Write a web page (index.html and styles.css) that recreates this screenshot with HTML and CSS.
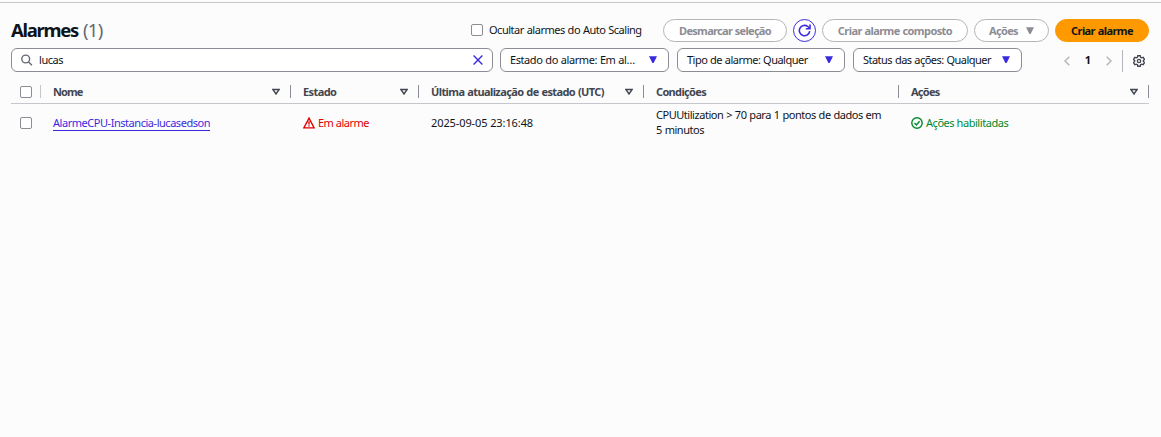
FILE: index.html
```html
<!DOCTYPE html>
<html lang="pt-BR">
<head>
<meta charset="utf-8">
<title>Alarmes</title>
<link rel="stylesheet" href="styles.css">
</head>
<body>
<main class="panel">
  <header class="header">
    <h1 class="title">Alarmes <span class="count">(1)</span></h1>
    <label class="hide-option"><span class="checkbox"></span><span class="hide-label">Ocultar alarmes do Auto Scaling</span></label>
    <div class="actions">
      <button class="button deselect">Desmarcar seleção</button>
      <button class="button refresh" aria-label="Atualizar"><svg width="13" height="13" viewBox="0 0 13 13"><path d="M11.700 7.200A5.200 5.200 0 1 1 9.800 2.500L11.400 4"/><path d="M12 .5v4.200H7.800"/></svg></button>
      <button class="button composite">Criar alarme composto</button>
      <button class="button menu"><span>Ações</span><svg width="8" height="7" viewBox="0 0 8 7"><path d="M0 .3h8L4.6 7H3.4z"/></svg></button>
      <button class="button primary">Criar alarme</button>
    </div>
  </header>
  <div class="filters">
    <div class="search">
      <svg class="lens" width="12" height="12" viewBox="0 0 12 12"><circle cx="4.700" cy="5" r="3.9"/><path d="M7.600 7.900l3.300 3.300"/></svg>
      <span class="query">lucas</span>
      <svg class="clear" width="10" height="10" viewBox="0 0 10 10"><path d="M.6.6l8.8 8.8M9.4.6L.6 9.4"/></svg>
    </div>
    <div class="select state"><span>Estado do alarme: Em al…</span><svg width="8" height="7" viewBox="0 0 8 7"><path d="M0 .3h8L4.6 7H3.4z"/></svg></div>
    <div class="select type"><span>Tipo de alarme: Qualquer</span><svg width="8" height="7" viewBox="0 0 8 7"><path d="M0 .3h8L4.6 7H3.4z"/></svg></div>
    <div class="select status"><span>Status das ações: Qualquer</span><svg width="8" height="7" viewBox="0 0 8 7"><path d="M0 .3h8L4.6 7H3.4z"/></svg></div>
    <nav class="pager">
      <svg class="arrow" width="6" height="10" viewBox="0 0 6 10"><path d="M5.3.8L1 5l4.3 4.2"/></svg>
      <b class="page">1</b>
      <svg class="arrow" width="6" height="10" viewBox="0 0 6 10"><path d="M.7.8L5 5 .7 9.2"/></svg>
      <span class="rule"></span>
      <svg class="gear" width="12" height="12" viewBox="0 0 16 16"><path d="M6.3 1h3.4l.4 2 1.500.800 2-.700 1.700 2.900L13.800 7.300v1.400l1.500 1.300-1.700 2.900-2-.700-1.500.800-.400 2H6.300l-.400-2-1.500-.800-2 .700L.700 10l1.500-1.300V7.300L.700 6l1.700-2.900 2 .700L5.900 3z"/><circle cx="8" cy="8" r="2.200"/></svg>
    </nav>
  </div>
  <section class="table">
    <div class="row head">
      <div class="cell pick"><span class="checkbox"></span></div>
      <div class="cell"><span class="h-name">Nome</span><svg class="sort" width="8" height="7" viewBox="0 0 8 7"><path d="M.9 1.500h6.200L4 6z"/></svg></div>
      <div class="cell"><span class="h-state">Estado</span><svg class="sort" width="8" height="7" viewBox="0 0 8 7"><path d="M.9 1.500h6.200L4 6z"/></svg></div>
      <div class="cell"><span class="h-update">Última atualização de estado (UTC)</span><svg class="sort" width="8" height="7" viewBox="0 0 8 7"><path d="M.9 1.500h6.200L4 6z"/></svg></div>
      <div class="cell"><span class="h-cond">Condições</span></div>
      <div class="cell"><span class="h-act">Ações</span><svg class="sort" width="8" height="7" viewBox="0 0 8 7"><path d="M.9 1.500h6.200L4 6z"/></svg></div>
    </div>
    <div class="row body">
      <div class="cell pick"><span class="checkbox"></span></div>
      <div class="cell"><a class="link">AlarmeCPU-Instancia-lucasedson</a></div>
      <div class="cell alarm"><svg width="12" height="12" viewBox="0 0 12 12"><path d="M6 1.200L11.200 10.900H.800z"/><path d="M6 4.300v3.200M6 8.300v1.300"/></svg><span>Em alarme</span></div>
      <div class="cell"><span class="date">2025-09-05 23:16:48</span></div>
      <div class="cell"><span class="cond">CPUUtilization &gt; 70 para 1 pontos de dados em<br>5 minutos</span></div>
      <div class="cell enabled"><svg width="12" height="12" viewBox="0 0 12 12"><circle cx="6" cy="6" r="5.200"/><path d="M3.500 6l1.900 1.900 3.200-3.700"/></svg><span>Ações habilitadas</span></div>
    </div>
  </section>
</main>
</body>
</html>
```
FILE: styles.css
```css
* { box-sizing: border-box; }
body { margin: 0; padding-top: 2px; background: #fcfcfd; color: #0f141a; font: 11px/15px "Noto Sans", sans-serif; white-space: nowrap; }
svg { display: block; flex: none; fill: none; stroke: currentColor; stroke-width: 1.4; }
.panel { height: 435px; border-top: 1px solid #c6c6cd; padding: 16px 12px 0 11px; }
.header { display: flex; height: 23px; align-items: center; }
.title { margin: 0; width: 460px; padding-bottom: 2px; font-size: 18.500px; line-height: 23px; letter-spacing: -1.300px; word-spacing: 1.500px; }
.count { color: #656871; font-weight: 400; letter-spacing: -.7px; }
.hide-option { display: flex; align-items: center; gap: 6px; width: 192px; padding-bottom: 1px; }
.hide-label { padding-bottom: 2px; letter-spacing: -.48px; word-spacing: .45px; }
.checkbox { flex: none; width: 12px; height: 12px; border: 1px solid #8c8c94; border-radius: 2px; background: #fff; }
.actions { display: flex; gap: 6px; }
.button { display: flex; align-items: center; justify-content: center; height: 23px; padding: 0 0 1px; border: 1px solid #b4b4bb; border-radius: 12px; background: #fff; color: #8c8c94; font: inherit; font-weight: 700; letter-spacing: -.58px; word-spacing: .5px; }
.deselect { width: 124px; letter-spacing: -.7px; }
.refresh { width: 23px; padding: 0; color: #3b2bdf; border-color: #3b2bdf; }
.refresh svg { stroke-width: 1.6; }
.composite { width: 146px; }
.menu { width: 75px; gap: 8px; letter-spacing: -.7px; }
.menu svg, .select svg { fill: currentColor; stroke: none; }
.primary { width: 94px; border-color: #ff9900; background: #ff9900; color: #0f141a; }
.filters { display: flex; height: 24px; margin-top: 6px; }
.search, .select { display: flex; align-items: center; border: 1px solid #8c8c94; border-radius: 6px; background: #fff; }
.search { width: 482px; padding: 0 9px; }
.lens { color: #656871; }
.query { flex: 1; margin-left: 6px; padding-bottom: 2px; letter-spacing: -.45px; }
.clear, .select svg { color: #3b2bdf; }
.select { justify-content: space-between; padding: 0 11px 0 9px; letter-spacing: -.52px; word-spacing: .45px; }
.select span { padding-bottom: 2px; }
.select svg { margin-bottom: 1px; }
.state { width: 169px; margin-left: 7px; letter-spacing: -.42px; }
.type { width: 168px; margin-left: 8px; }
.status { width: 169px; margin-left: 8px; }
.pager { display: flex; flex: 1; align-items: center; padding-left: 42px; padding-top: 1px; }
.arrow { color: #b4b4bb; }
.page { width: 36px; padding-bottom: 2px; text-align: center; }
.rule { width: 1px; height: 22px; margin: 0 10px; background: #b4b4bb; }
.gear { color: #424650; stroke-width: 1.800; }
.table { margin-top: 8px; }
.row { display: grid; grid-template-columns: 30px 250px 128px 225px 255px 250px; align-items: center; }
.head { height: 24px; border-bottom: 1px solid #c6c6cd; color: #424650; font-weight: 700; }
.body { height: 38px; }
.cell { display: flex; align-items: center; padding-left: 12px; }
.pick { padding-left: 9px; }
.head .cell { height: 13px; justify-content: space-between; padding-right: 10px; border-right: 1px solid #8c8c94; }
.head .pick { border-color: #c6c6cd; }
.h-name { letter-spacing: -.9px; }
.h-state { letter-spacing: -.58px; }
.h-update { letter-spacing: -.59px; word-spacing: .5px; }
.h-cond { letter-spacing: -.66px; }
.h-act { letter-spacing: -.75px; }
.link { color: #3b2bdf; line-height: 14px; letter-spacing: -.46px; border-bottom: 1px solid #3b2bdf; }
.date, .cond, .alarm span, .enabled span { padding-bottom: 2px; }
.date { letter-spacing: -.1px; }
.cond { letter-spacing: -.46px; word-spacing: .43px; }
.alarm { gap: 3px; color: #e00000; letter-spacing: -.5px; }
.enabled { gap: 3px; color: #00892f; letter-spacing: -.45px; }
```
